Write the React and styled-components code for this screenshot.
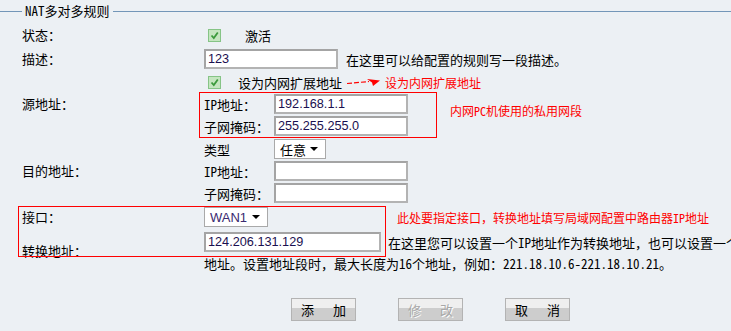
import React from 'react';
import styled, { createGlobalStyle } from 'styled-components';

const GlobalStyle = createGlobalStyle`
  html, body {
    margin: 0;
    padding: 0;
    overflow: hidden;
    background: #ecf0f4;
  }
  body {
    font-family: "Noto Sans Mono CJK SC", "Noto Sans CJK SC", sans-serif;
    font-size: 13px;
    color: #000;
  }
`;

const Page = styled.div`
  width: 731px;
  height: 331px;
  position: relative;
  overflow: hidden;
`;

const Legend = styled.div`
  display: flex;
  align-items: center;
  height: 22px;
  &::before, &::after {
    content: '';
    height: 1px;
    background: #7396b8;
  }
  &::before { width: 22px; }
  &::after { flex: 1; }
`;

const LegendText = styled.span`
  padding: 0 3px;
  line-height: 22px;
`;

const Form = styled.div`
  position: relative;
  padding: 2px 0 0 22px;
`;

const Row = styled.div`
  display: flex;
  align-items: ${p => p.$align || 'center'};
  height: ${p => (p.$h ? p.$h + 'px' : 'auto')};
  margin-top: ${p => p.$mt || 0}px;
`;

const Label = styled.div`
  width: 182px;
  flex-shrink: 0;
  line-height: ${p => p.$lh || 14}px;
  margin-top: ${p => p.$mt || 0}px;
  white-space: nowrap;
`;

const SubLabel = styled.div`
  width: 70px;
  flex-shrink: 0;
  white-space: nowrap;
`;

const SubRow = styled.div`
  display: flex;
  align-items: center;
  height: 22px;
`;

const Check = styled.span`
  display: inline-flex;
  align-items: center;
  justify-content: center;
  box-sizing: border-box;
  width: 13px;
  height: 13px;
  margin-left: 4px;
  margin-right: ${p => p.$gap}px;
  border: 1px solid #86c486;
  background: #c5e6c0;
  svg { display: block; }
`;

const Input = styled.div`
  box-sizing: border-box;
  width: ${p => p.$w}px;
  height: 20px;
  border: 2px solid #b3b3b3;
  border-top-color: #a4a4a4;
  border-left-color: #a4a4a4;
  background: #fff;
  padding: 0 2px;
  font-family: "Liberation Sans", Arial, sans-serif;
  font-size: 12.7px;
  line-height: 16px;
  color: #1a1050;
  flex-shrink: 0;
`;

const Select = styled.div`
  box-sizing: border-box;
  display: flex;
  align-items: center;
  justify-content: space-between;
  width: ${p => p.$w}px;
  height: 20px;
  padding: 0 7px 0 5px;
  border: 1px solid #a9a9a9;
  background: #fff;
  font-family: ${p => (p.$latin ? '"Liberation Sans", Arial, sans-serif' : 'inherit')};
  color: ${p => (p.$latin ? '#3a2a70' : '#000')};
  flex-shrink: 0;
  &::after {
    content: '';
    border-left: 4px solid transparent;
    border-right: 4px solid transparent;
    border-top: 4px solid #000;
  }
`;

const Hint = styled.span`
  margin-left: ${p => p.$ml || 0}px;
  white-space: nowrap;
  color: ${p => (p.$red ? '#ff0000' : '#000')};
  font-size: ${p => (p.$red ? 12 : 13)}px;
`;

const Frame = styled.div`
  box-sizing: border-box;
  margin-left: -5px;
  padding: 0 28px 0 4px;
  border: 1px solid #ff0000;
`;

const Overlay = styled.div`
  position: absolute;
  left: 18px;
  top: 184px;
  width: 368px;
  height: 51px;
  box-sizing: border-box;
  border: 1px solid #ff0000;
  pointer-events: none;
`;

const Cell = styled.div`
  display: flex;
  flex-direction: column;
`;

const Line = styled.div`
  display: flex;
  align-items: center;
  height: ${p => p.$h}px;
  white-space: nowrap;
`;

const Buttons = styled.div`
  display: flex;
  gap: 42px;
  padding-left: 269px;
  margin-top: 24px;
`;

const Button = styled.button`
  box-sizing: border-box;
  width: 65px;
  height: 23px;
  padding: 0 0 0 3px;
  border: 1px solid #b3b3b3;
  background: linear-gradient(#efefef 0, #efefef 45%, #cdcdcd 45%, #cdcdcd 100%);
  font-family: "Noto Sans CJK SC", sans-serif;
  font-size: 13px;
  letter-spacing: 3px;
  color: ${p => (p.disabled ? '#a8a8a8' : '#000')};
  text-shadow: ${p => (p.disabled ? '1px 1px 0 #fff' : 'none')};
`;

const CheckMark = () => (
  <svg width="9" height="9" viewBox="0 0 9 9">
    <path d="M1.5 4.5 L3.8 7 L7.8 1.5" fill="none" stroke="#3c9a3c" strokeWidth="1.8" />
  </svg>
);

const Arrow = () => (
  <svg width="34" height="10" viewBox="0 0 34 10" style={{ marginLeft: 5 }}>
    <path d="M0 6.5 L22 4.5" stroke="#ff0000" strokeWidth="1.2" strokeDasharray="5 2" />
    <path d="M20 2 L33 3.5 L26 9 L25 5.5 Z" fill="#ff0000" />
  </svg>
);

export default function App() {
  return (
    <Page>
      <GlobalStyle />
      <Legend><LegendText>NAT多对多规则</LegendText></Legend>
      <Form>
        <Row $h={22}>
          <Label>状态：</Label>
          <Check $gap={24}><CheckMark /></Check>
          <span>激活</span>
        </Row>
        <Row $h={26}>
          <Label>描述：</Label>
          <Input $w={134}>123</Input>
          <Hint $ml={8}>在这里可以给配置的规则写一段描述。</Hint>
        </Row>
        <Row $h={20}>
          <Label />
          <Check $gap={17}><CheckMark /></Check>
          <span>设为内网扩展地址</span>
          <Arrow />
          <Hint $red $ml={4}>设为内网扩展地址</Hint>
        </Row>
        <Row $align="flex-start">
          <Label $lh={22} $mt={1}>源地址：</Label>
          <Frame>
            <SubRow>
              <SubLabel>IP地址：</SubLabel>
              <Input $w={134}>192.168.1.1</Input>
            </SubRow>
            <SubRow>
              <SubLabel>子网掩码：</SubLabel>
              <Input $w={134}>255.255.255.0</Input>
            </SubRow>
          </Frame>
          <Hint $red $ml={13} style={{ lineHeight: '38px' }}>内网PC机使用的私用网段</Hint>
        </Row>
        <Row $h={22}>
          <Label />
          <SubLabel>类型</SubLabel>
          <Select $w={52}>任意</Select>
        </Row>
        <Row $h={22}>
          <Label>目的地址：</Label>
          <SubLabel>IP地址：</SubLabel>
          <Input $w={134} />
        </Row>
        <Row $h={22}>
          <Label />
          <SubLabel>子网掩码：</SubLabel>
          <Input $w={134} />
        </Row>
        <Row $h={22} $mt={2}>
          <Label>接口：</Label>
          <Select $w={64} $latin>WAN1</Select>
          <Hint $red $ml={129}>此处要指定接口，转换地址填写局域网配置中路由器IP地址</Hint>
        </Row>
        <Row $align="flex-start" $mt={4}>
          <Label $mt={12}>转换地址：</Label>
          <Cell>
            <Line $h={20}>
              <Input $w={177}>124.206.131.129</Input>
              <Hint $ml={7}>在这里您可以设置一个IP地址作为转换地址，也可以设置一个</Hint>
            </Line>
            <Line $h={22}>地址。设置地址段时，最大长度为16个地址，例如：221.18.10.6-221.18.10.21。</Line>
          </Cell>
        </Row>
        <Buttons>
          <Button>添　加</Button>
          <Button disabled>修　改</Button>
          <Button>取　消</Button>
        </Buttons>
        <Overlay />
      </Form>
    </Page>
  );
}
